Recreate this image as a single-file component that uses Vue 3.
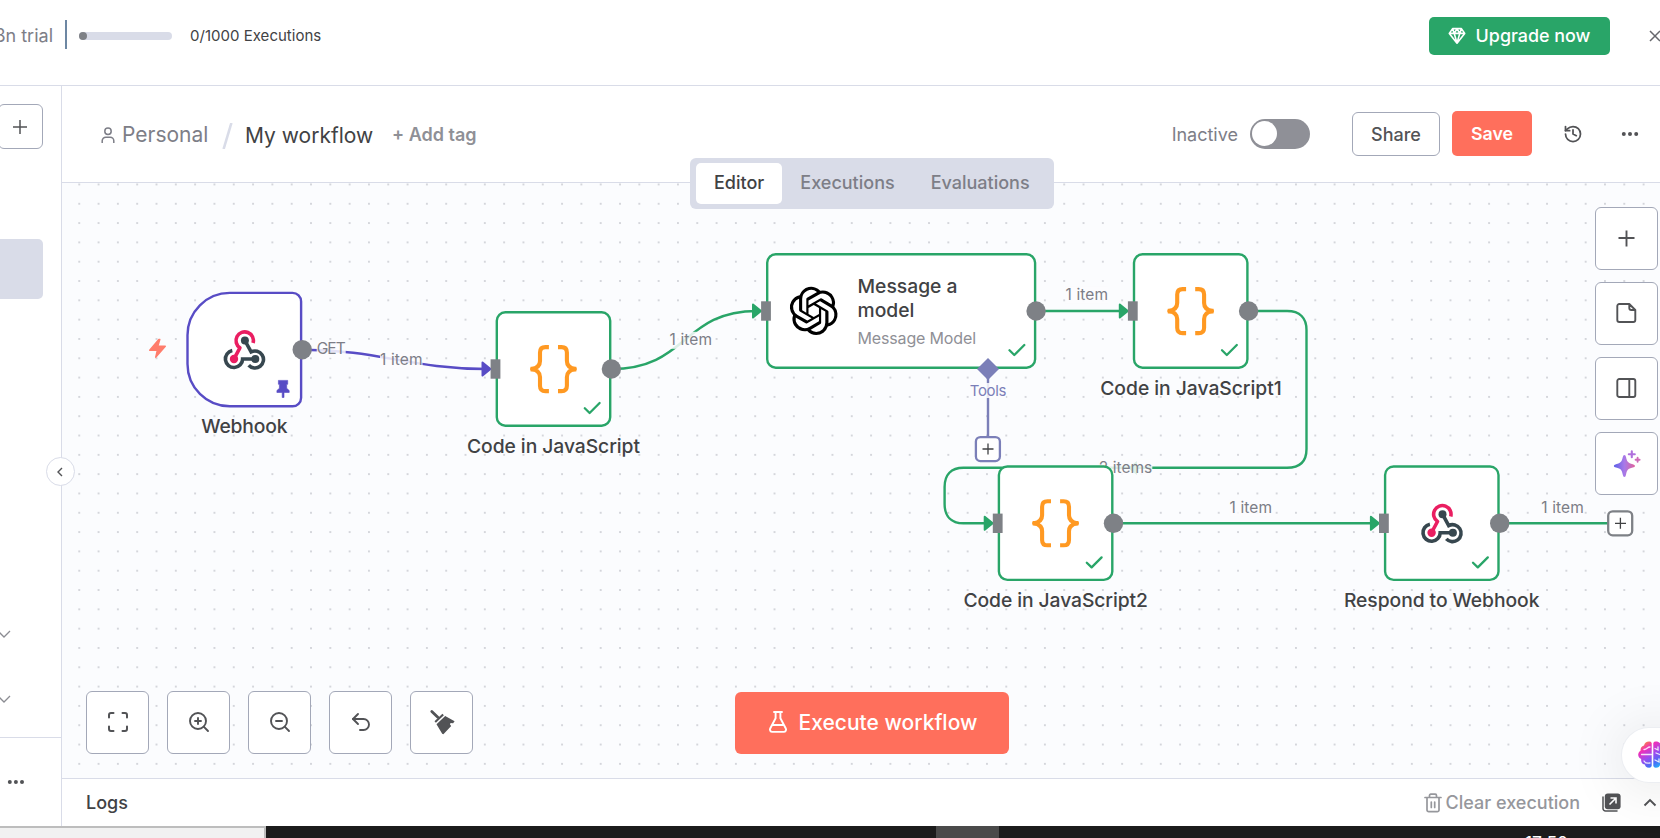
<script setup>
const tabs = [
  { name: 'Editor', active: true },
  { name: 'Executions' },
  { name: 'Evaluations' },
]

const codeNodes = [
  { x: 495.6, y: 311.1, title: 'Code in JavaScript', len: 173, cx: 553.5, base: 452.5 },
  { x: 1132.8, y: 253.1, title: 'Code in JavaScript1', len: 181.5, cx: 1191, base: 394.7 },
  { x: 997.7, y: 465.3, title: 'Code in JavaScript2', len: 184.5, cx: 1055.7, base: 607 },
]

const inputs = [
  { x: 495.5, y: 369, color: '#584cc5' },
  { x: 766, y: 311, color: '#29a568' },
  { x: 1132.8, y: 311, color: '#29a568' },
  { x: 997.7, y: 523.3, color: '#29a568' },
  { x: 1383.9, y: 523.3, color: '#29a568' },
]

const outputs = [
  { x: 302.2, y: 349.7 },
  { x: 611.4, y: 369 },
  { x: 1036.1, y: 311 },
  { x: 1248.6, y: 311 },
  { x: 1113.5, y: 523.3 },
  { x: 1499.7, y: 523.3 },
]

const edgeLabels = [
  { text: 'GET', x: 316.7, y: 354.3, len: 29 },
  { text: '1 item', x: 380, y: 364.6, len: 42.5 },
  { text: '1 item', x: 669.6, y: 345.3, len: 42.5 },
  { text: '1 item', x: 1065.6, y: 300, len: 42.5 },
  { text: '2 items', x: 1098.8, y: 473.2, len: 53.5 },
  { text: '1 item', x: 1229.6, y: 512.9, len: 42.5 },
  { text: '1 item', x: 1541.3, y: 512.9, len: 42.5 },
]

const checks = [
  [583.8, 402],
  [1008.5, 344],
  [1221, 344],
  [1085.8, 556.4],
  [1472, 556.4],
]

const webhookIcons = [
  [223.7, 330.5],
  [1421.3, 504.2],
]
</script>

<template>
  <div class="app">
    <header class="banner">
      <span class="trial">n8n trial</span>
      <span class="divider"></span>
      <span class="meter"><i></i></span>
      <span class="count">0/1000 Executions</span>
      <button class="upgrade">
        <svg width="18" height="18" viewBox="0 0 18 18" fill="none" stroke="#fff" stroke-width="1.6" stroke-linejoin="round">
          <path d="M4.6 1.6h8.8l3.3 4.8L9 16.2 1.3 6.4zM1.3 6.4h15.4M6.2 6.4 9 1.8l2.8 4.6L9 16zM4.6 1.6l1.6 4.8M13.4 1.6l-1.6 4.8" />
        </svg>
        <span>Upgrade now</span>
      </button>
      <svg class="close" width="12" height="12" viewBox="0 0 12 12" fill="none" stroke="#66676c" stroke-width="1.5">
        <path d="M1 1l10 10M11 1L1 11" />
      </svg>
    </header>

    <div class="body">
      <aside class="sidebar">
        <div class="side-add">
          <svg width="14" height="14" viewBox="0 0 14 14" stroke="#525356" stroke-width="1.5"><path d="M7 0v14M0 7h14" /></svg>
        </div>
        <div class="side-active"></div>
        <svg class="chev c1" width="14" height="8" viewBox="0 0 14 8" fill="none" stroke="#8b8c92" stroke-width="1.3"><path d="M1 1l6 6 6-6" /></svg>
        <svg class="chev c2" width="14" height="8" viewBox="0 0 14 8" fill="none" stroke="#8b8c92" stroke-width="1.3"><path d="M1 1l6 6 6-6" /></svg>
        <div class="side-foot">
          <svg width="18" height="6" viewBox="0 0 18 6" fill="#525356"><circle cx="2.8" cy="3" r="2" /><circle cx="8.9" cy="3" r="2" /><circle cx="15" cy="3" r="2" /></svg>
        </div>
        <div class="collapse">
          <svg width="6" height="10" viewBox="0 0 6 10" fill="none" stroke="#525356" stroke-width="1.4"><path d="M5 1L1 5l4 4" /></svg>
        </div>
      </aside>

      <main class="main">
        <div class="toolbar">
          <svg class="person" width="14" height="17" viewBox="0 0 14 17" fill="none" stroke="#7d7e87" stroke-width="1.5">
            <circle cx="7" cy="4.3" r="3.2" /><path d="M1.2 16v-2.2a3.6 3.6 0 0 1 3.6-3.6h4.4a3.6 3.6 0 0 1 3.6 3.6V16" />
          </svg>
          <span class="personal">Personal</span>
          <svg class="slash" width="11" height="26" viewBox="0 0 11 26" stroke="#d9dce8" stroke-width="2.6"><path d="M9.4 0L1.6 26" /></svg>
          <span class="wfname">My workflow</span>
          <span class="addtag">+ Add tag</span>
          <span class="inactive">Inactive</span>
          <span class="switch"><i></i></span>
          <button class="share">Share</button>
          <button class="save">Save</button>
          <svg class="history" width="20" height="20" viewBox="0 0 24 24" fill="none" stroke="#525356" stroke-width="2.1" stroke-linecap="round" stroke-linejoin="round">
            <path d="M3 12a9 9 0 1 0 9-9 9.75 9.75 0 0 0-6.74 2.74L3 8" /><path d="M3 3v5h5M12 7v5l4 2" />
          </svg>
          <svg class="more" width="18" height="6" viewBox="0 0 18 6" fill="#525356"><circle cx="2.8" cy="3" r="2" /><circle cx="9" cy="3" r="2" /><circle cx="15.2" cy="3" r="2" /></svg>
        </div>

        <div class="canvas">
          <svg class="flow" width="1660" height="838" viewBox="0 0 1660 838">
            <defs>
              <pattern id="dots" x="69.6" y="174.8" width="19.313" height="19.313" patternUnits="userSpaceOnUse">
                <circle cx="9.65" cy="9.65" r="0.8" fill="#a3a5af" />
              </pattern>
              <g id="braces" fill="none" stroke="#ff9922" stroke-width="4.1">
                <path d="M18.8 2H15.3Q9.9 2 9.9 7.4V16Q9.9 22.4 2 24Q9.9 25.6 9.9 32V40.6Q9.9 46 15.3 46H18.8" stroke-linejoin="round" />
                <path d="M27.9 2H31.4Q36.8 2 36.8 7.4V16Q36.8 22.4 44.7 24Q36.8 25.6 36.8 32V40.6Q36.8 46 31.4 46H27.9" stroke-linejoin="round" />
                <path d="M0.5 24H6M40.7 24H46.2" stroke-width="4.6" />
              </g>
              <g id="hook" fill="none" stroke-width="3.6">
                <path d="M29.4 12.4A8.7 8.7 0 1 0 16.2 17.3L10.3 28.3" stroke="#ea1e61" stroke-linejoin="round" />
                <circle cx="10.3" cy="28.5" r="4.2" fill="#ea1e61" stroke="none" />
                <g stroke="#37474f">
                  <path d="M21.2 10L27.4 21.4A8.5 8.5 0 1 1 25 34.7" />
                  <path d="M31.6 28.5H18.9A8.6 8.6 0 1 1 8.6 20" />
                </g>
                <circle cx="21.2" cy="10" r="4" fill="#37474f" stroke="none" />
                <circle cx="31.6" cy="28.5" r="4" fill="#37474f" stroke="none" />
              </g>
            </defs>
            <rect x="62" y="183" width="1598" height="595" fill="url(#dots)" />

            <g fill="none" stroke="#29a568" stroke-width="2.4">
              <path d="M302 349.7C380 349.7 410 369 487 369" stroke="#584cc5" />
              <path d="M611 369C688 369 682 311 757 311" />
              <path d="M1036 311H1126" />
              <path d="M1248 311H1287C1300 311 1306.5 318 1306.5 330V449C1306.5 461 1300 467.8 1287 467.8H963.5C951 467.8 944.6 475 944.6 487V504C944.6 516 951 523.3 963.5 523.3H990" />
              <path d="M1113 523.3H1376M1499 523.3H1608" />
              <path d="M988 369V437" stroke="#7b7fb8" />
            </g>
            <path d="M1137 461V475L1128 468z" fill="#29a568" />

            <g v-for="(l, i) in edgeLabels" :key="i">
              <rect :x="l.x" :y="l.y - 13.5" :width="l.len" height="17" fill="#fbfcfe" fill-opacity="0.85" />
              <text :x="l.x" :y="l.y" :textLength="l.len" class="edge-label">{{ l.text }}</text>
            </g>
            <rect x="970" y="383" width="36" height="15" fill="#fbfcfe" fill-opacity="0.85" />
            <text x="969.8" y="396.2" textLength="36.6" class="edge-label tools">Tools</text>

            <g fill="#fff" stroke="#29a568" stroke-width="2.4">
              <path d="M229.8 292.9H292.5A8.6 8.6 0 0 1 301.1 301.5V397.7A8.6 8.6 0 0 1 292.5 406.3H229.8A42.3 42.3 0 0 1 187.5 364V335.2A42.3 42.3 0 0 1 229.8 292.9z" stroke="#584cc5" />
              <rect v-for="n in codeNodes" :key="n.title" :x="n.x + 1.2" :y="n.y + 1.2" width="113.4" height="113.4" rx="8.5" />
              <rect x="767.2" y="254.3" width="267.9" height="113.4" rx="8.5" />
              <rect x="1385.1" y="466.5" width="113.4" height="113.4" rx="8.5" />
            </g>

            <use v-for="n in codeNodes" :key="'b' + n.title" href="#braces" :x="n.x + 34.5" :y="n.y + 34" />
            <use v-for="(w, i) in webhookIcons" :key="'w' + i" href="#hook" :x="w[0]" :y="w[1]" />
            <path v-for="(c, i) in checks" :key="'c' + i" :transform="`translate(${c[0]} ${c[1]})`" d="M1 6.3L5.8 11L15.8 1" fill="none" stroke="#29a568" stroke-width="2.3" stroke-linecap="round" stroke-linejoin="round" />

            <path transform="translate(789.6 286.8) scale(2.01)" fill="#000" d="M22.2819 9.8211a5.9847 5.9847 0 0 0-.5157-4.9108 6.0462 6.0462 0 0 0-6.5098-2.9A6.0651 6.0651 0 0 0 4.9807 4.1818a5.9847 5.9847 0 0 0-3.9977 2.9 6.0462 6.0462 0 0 0 .7427 7.0966 5.98 5.98 0 0 0 .511 4.9107 6.051 6.051 0 0 0 6.5146 2.9001A5.9847 5.9847 0 0 0 13.2599 24a6.0557 6.0557 0 0 0 5.7718-4.2058 5.9894 5.9894 0 0 0 3.9977-2.9001 6.0557 6.0557 0 0 0-.7475-7.0729zm-9.022 12.6081a4.4755 4.4755 0 0 1-2.8764-1.0408l.1419-.0804 4.7783-2.7582a.7948.7948 0 0 0 .3927-.6813v-6.7369l2.02 1.1686a.071.071 0 0 1 .038.052v5.5826a4.504 4.504 0 0 1-4.4945 4.4944zm-9.6607-4.1254a4.4708 4.4708 0 0 1-.5346-3.0137l.142.0852 4.783 2.7582a.7712.7712 0 0 0 .7806 0l5.8428-3.3685v2.3324a.0804.0804 0 0 1-.0332.0615L9.74 19.9502a4.4992 4.4992 0 0 1-6.1408-1.6464zM2.3408 7.8956a4.485 4.485 0 0 1 2.3655-1.9728V11.6a.7664.7664 0 0 0 .3879.6765l5.8144 3.3543-2.0201 1.1685a.0757.0757 0 0 1-.071 0l-4.8303-2.7865A4.504 4.504 0 0 1 2.3408 7.872zm16.5963 3.8558L13.1038 8.364 15.1192 7.2a.0757.0757 0 0 1 .071 0l4.8303 2.7913a4.4944 4.4944 0 0 1-.6765 8.1042v-5.6772a.79.79 0 0 0-.407-.667zm2.0107-3.0231l-.142-.0852-4.7735-2.7818a.7759.7759 0 0 0-.7854 0L9.409 9.2297V6.8974a.0662.0662 0 0 1 .0284-.0615l4.8303-2.7866a4.4992 4.4992 0 0 1 6.6802 4.66zM8.3065 12.863l-2.02-1.1638a.0804.0804 0 0 1-.038-.0567V6.0742a4.4992 4.4992 0 0 1 7.3757-3.4537l-.142.0805L8.704 5.459a.7948.7948 0 0 0-.3927.6813zm1.0976-2.3654l2.602-1.4998 2.6069 1.4998v2.9994l-2.5974 1.4997-2.6067-1.4997Z" />
            <text x="857.5" y="293.3" class="title">Message a</text>
            <text x="857.5" y="317.3" class="title">model</text>
            <text x="857.5" y="343.5" textLength="118.5" class="subtitle">Message Model</text>

            <g fill="#7e8186">
              <g v-for="(p, i) in inputs" :key="'i' + i">
                <path :transform="`translate(${p.x} ${p.y})`" d="M-13 -6.5L-5 0L-13 6.5z" :fill="p.color" :stroke="p.color" stroke-width="2" stroke-linejoin="round" />
                <rect :x="p.x - 4.9" :y="p.y - 9.7" width="9.8" height="19.4" />
              </g>
              <circle v-for="(p, i) in outputs" :key="'o' + i" :cx="p.x" :cy="p.y" r="9.7" />
            </g>
            <path d="M988 358L999 369L988 380L977 369z" fill="#7b7fb8" />
            <rect x="975.9" y="437.1" width="24" height="24" rx="4.5" fill="#fff" stroke="#7b7fb8" stroke-width="2.3" />
            <path d="M982.5 449H993.5M988 443.5V454.5" stroke="#414244" stroke-width="1.3" />
            <rect x="1608.2" y="511.3" width="24" height="24" rx="4.5" fill="#fff" stroke="#7e8186" stroke-width="2.3" />
            <path d="M1615 523.3H1626M1620.4 517.8V528.8" stroke="#414244" stroke-width="1.3" />

            <path d="M158.8 339.5L149.7 350.3H157.3L155.7 357.2L165.3 346.3H157.8L159.8 339.5z" fill="#ff7d6c" stroke="#ff7d6c" stroke-width="1.4" stroke-linejoin="round" />
            <path d="M278.4 380.4H287.7V384.3H286.7V388.3L289.2 390.5V392.5H284V397.5H282.2V392.5H276.9V390.5L279.4 388.3V384.3H278.4z" fill="#584cc5" stroke="#584cc5" stroke-width=".6" stroke-linejoin="round" />

            <text x="244.4" y="432.8" text-anchor="middle" textLength="86.5" class="title">Webhook</text>
            <text v-for="n in codeNodes" :key="'t' + n.title" :x="n.cx" :y="n.base" text-anchor="middle" :textLength="n.len" class="title">{{ n.title }}</text>
            <text x="1441.7" y="607" text-anchor="middle" textLength="195.5" class="title">Respond to Webhook</text>
          </svg>

          <nav class="tabs">
            <span v-for="t in tabs" :key="t.name" :class="['tab', { active: t.active }]">{{ t.name }}</span>
          </nav>

          <div class="side-tools">
            <button class="tool"><svg width="17" height="17" viewBox="0 0 17 17" stroke="#525356" stroke-width="1.9"><path d="M8.5 0.5v16M0.5 8h16" /></svg></button>
            <button class="tool"><svg width="21" height="21" viewBox="0 0 21 21" fill="none" stroke="#525356" stroke-width="1.9" stroke-linejoin="round"><path d="M13.3 1H3.3a2 2 0 0 0-2 2v14a2 2 0 0 0 2 2h14a2 2 0 0 0 2-2V7zM13.300 1v4a2 2 0 0 0 2 2h4" /></svg></button>
            <button class="tool"><svg width="21" height="21" viewBox="0 0 21 21" fill="none" stroke="#525356" stroke-width="1.9"><rect x="1.3" y="1" width="18" height="18" rx="2" /><path d="M13.300 1v18" /></svg></button>
            <button class="tool">
              <svg width="28" height="28" viewBox="0 0 28 28">
                <defs><linearGradient id="spark" x1="0" x2="1"><stop offset="0" stop-color="#5b60e8" /><stop offset=".5" stop-color="#a879e8" /><stop offset="1" stop-color="#e0639b" /></linearGradient></defs>
                <path d="M11.4 4.900q1.200 0 1.600 2.200c.9 4.500 1.800 6 6.800 7.200q2.200.5 2.200 1.600t-2.200 1.600c-5 1.200-5.900 2.700-6.800 7.200q-.4 2.200-1.600 2.200t-1.600-2.200c-.9-4.500-1.800-6-6.800-7.200q-2.200-.5-2.200-1.600t2.200-1.600c5-1.200 5.900-2.700 6.800-7.200q.4-2.200 1.600-2.200z" fill="url(#spark)" />
                <path d="M18.800 1.200v6M15.800 4.200h6" stroke="#b070dd" stroke-width="2.100" stroke-linecap="round" />
                <path d="M24.600 7.800v4M22.600 9.800h4" stroke="#cf6ab8" stroke-width="1.900" stroke-linecap="round" />
              </svg>
            </button>
          </div>

          <div class="bottom-tools">
            <button class="tool"><svg width="22" height="22" viewBox="0 0 22 22" fill="none" stroke="#525356" stroke-width="2" stroke-linecap="round"><path d="M2 6.500V4a2 2 0 0 1 2-2h2.500M15.500 2H18a2 2 0 0 1 2 2v2.500M20 15.500V18a2 2 0 0 1-2 2h-2.500M6.500 20H4a2 2 0 0 1-2-2v-2.500" /></svg></button>
            <button class="tool"><svg width="24" height="24" viewBox="0 0 24 24" fill="none" stroke="#525356" stroke-width="1.900" stroke-linecap="round"><circle cx="11" cy="11" r="8" /><path d="M21 21l-4.300-4.300M11 8v6M8 11h6" /></svg></button>
            <button class="tool"><svg width="24" height="24" viewBox="0 0 24 24" fill="none" stroke="#525356" stroke-width="1.900" stroke-linecap="round"><circle cx="11" cy="11" r="8" /><path d="M21 21l-4.300-4.300M8 11h6" /></svg></button>
            <button class="tool"><svg width="24" height="24" viewBox="0 0 24 24" fill="none" stroke="#525356" stroke-width="1.900" stroke-linecap="round" stroke-linejoin="round"><path d="M9 14L4 9l5-5" /><path d="M4 9h10.500a5.500 5.500 0 0 1 0 11H11" /></svg></button>
            <button class="tool"><svg width="26" height="26" viewBox="0 0 26 26" fill="#525356"><path d="M2.800 2.500L8.800 8.300" stroke="#525356" stroke-width="2.800" stroke-linecap="round" /><path d="M5.500 12.300L13.400 4.800l1.500 1.400-8 7.600zM7.500 15.200L16.200 7l9.400 5.200-1.500 2.100-2.600-.4-.5 1.600 1.200 1.500-7.800 8.200-1.200-.4z" /></svg></button>
          </div>

          <button class="execute">
            <svg width="20" height="24" viewBox="0 0 20 24" fill="none" stroke="#fff" stroke-width="1.900" stroke-linejoin="round" stroke-linecap="round">
              <path d="M6 2h8M7.600 2v6.300L2.200 18.500a2.300 2.300 0 0 0 2 3.400h11.600a2.300 2.300 0 0 0 2-3.400L12.400 8.300V2M5 15h10" />
            </svg>
            <span>Execute workflow</span>
          </button>
        </div>

        <div class="logs">
          <span class="logs-title">Logs</span>
          <svg class="trash" width="18" height="20" viewBox="0 0 18 20" fill="none" stroke="#96979c" stroke-width="1.700" stroke-linecap="round" stroke-linejoin="round">
            <path d="M1 4.500h16M3 4.500V17a1.700 1.700 0 0 0 1.700 1.700h8.600A1.700 1.700 0 0 0 15 17V4.500M5.500 4.300V2.500A1.300 1.300 0 0 1 6.800 1.200h4.400a1.300 1.300 0 0 1 1.300 1.300v1.800M7.300 9v5.500M10.700 9v5.500" />
          </svg>
          <span class="clear">Clear execution</span>
          <svg class="popout" width="19" height="19" viewBox="0 0 19 19">
            <path d="M1 4v11.500A2.500 2.500 0 0 0 3.500 18H15" fill="none" stroke="#525356" stroke-width="1.500" stroke-linecap="round" />
            <rect x="2.800" y=".4" width="15.800" height="15.800" rx="3" fill="#525356" />
            <path d="M7.500 11.500l6-6M8.500 5h5.500v5.500" fill="none" stroke="#fff" stroke-width="1.600" />
          </svg>
          <svg class="up" width="14" height="9" viewBox="0 0 14 9" fill="none" stroke="#525356" stroke-width="1.900"><path d="M1.500 7.500L7 2l5.500 5.500" /></svg>
        </div>
      </main>
    </div>

    <footer class="taskbar">
      <div class="search"></div>
      <div class="task"></div>
      <span class="clock">17:50</span>
    </footer>

    <div class="assistant">
      <svg width="30" height="28" viewBox="0 0 30 28">
        <defs>
          <linearGradient id="brain" gradientUnits="userSpaceOnUse" x1="3" y1="1" x2="20" y2="27">
            <stop offset="0" stop-color="#f9a01b" /><stop offset=".26" stop-color="#f02fb8" /><stop offset=".55" stop-color="#9a4cf0" /><stop offset=".8" stop-color="#4a6cf6" /><stop offset="1" stop-color="#22b3f8" />
          </linearGradient>
        </defs>
        <path d="M13.700 2v23a2.500 2.500 0 0 1-2.500 1.800c-3 0-4-1.500-4.300-3.300C4 23 2.800 21 3.200 18 .5 17 .2 14.500.2 13.500S1 10.500 2.500 9.700C2.500 7 3.500 5 6 4.500 6.500 1.800 8.500.6 11 .6a2.700 2.700 0 0 1 2.700 1.400z" fill="url(#brain)" />
        <path d="M15.300 2v23a2.500 2.500 0 0 0 2.500 1.800c3 0 4-1.500 4.300-3.300 3-.5 4-2.500 4-5.500 2-1 3-3 3-4.500s-1-3-2.500-3.800c0-2.700-1-4.700-3.500-5.200C22.500 1.800 20.500.6 18 .6A2.700 2.700 0 0 0 15.300 2z" fill="url(#brain)" />
        <path d="M3.500 13.500h10M6 8.500c3 .3 3-2.500 6-2.500M6 20c1 2 3.500 2.500 6 2M17 7.500l3 1.500v-3M18 12l5 2M17 19l4 2v-3" fill="none" stroke="#fff" stroke-opacity=".85" stroke-width="1.300" stroke-linecap="round" />
      </svg>
    </div>
  </div>
</template>

<style>
body {
  margin: 0;
  overflow: hidden;
}
</style>

<style scoped>
.app {
  position: relative;
  width: 1660px;
  height: 838px;
  overflow: hidden;
  display: flex;
  flex-direction: column;
  background: #fff;
  font-family: Inter, "Open Sans", sans-serif;
  font-size: 18px;
  color: #414244;
  white-space: nowrap;
}
.app * { box-sizing: border-box; }
svg { display: block; flex: none; }
button {
  font: inherit;
  padding: 0;
  margin: 0;
  border: 0;
  display: flex;
  align-items: center;
  justify-content: center;
}
.banner {
  height: 86px;
  flex: none;
  display: flex;
  align-items: center;
  border-bottom: 1px solid #d9dce8;
  padding-bottom: 14px;
}
.trial {
  width: 53px;
  display: flex;
  justify-content: flex-end;
  color: #7d7e87;
  flex: none;
}
.divider { width: 2px; height: 29px; margin: -2px 0 0 12px; background: #6d87a3; }
.meter { width: 93px; height: 8px; margin-left: 12px; border-radius: 4px; background: #d9dce8; }
.meter i { display: block; width: 8px; height: 8px; border-radius: 4px; background: #7e8186; }
.count { margin-left: 18px; font-size: 15px; letter-spacing: 0.02px; width: 140px; }
.upgrade {
  margin-left: auto;
  width: 181px;
  height: 38px;
  border-radius: 5px;
  background: #29a568;
  color: #fff;
  font-weight: 500;
  font-size: 17.9px;
  gap: 10px;
}
.upgrade svg { margin-left: -1px; }
.close { margin: 0 -1px 0 39px; }

.body { height: 740px; flex: none; display: flex; }
.sidebar {
  position: relative;
  width: 62px;
  flex: none;
  border-right: 1px solid #d9dce8;
  display: flex;
  flex-direction: column;
}
.side-add {
  width: 45px;
  height: 45px;
  margin: 18px 0 0 -2px;
  border: 1px solid #a3a8b8;
  border-radius: 6px;
  display: flex;
  align-items: center;
  justify-content: center;
  padding-right: 1px;
}
.side-active { width: 48px; height: 60px; margin: 90px 0 0 -5px; border-radius: 5px; background: #d9dce8; }
.chev { margin-left: -3px; }
.c1 { margin-top: 331px; }
.c2 { margin-top: 57px; }
.side-foot { margin-top: auto; height: 89px; border-top: 1px solid #d9dce8; padding: 41px 0 0 7px; }
.collapse {
  position: absolute;
  left: 46px;
  top: 371px;
  width: 29px;
  height: 29px;
  border: 1px solid #d9dce8;
  border-radius: 50%;
  background: #fff;
  z-index: 3;
  display: flex;
  align-items: center;
  justify-content: center;
  padding-right: 2px;
}
.main { flex: 1; min-width: 0; display: flex; flex-direction: column; }
.toolbar {
  height: 97px;
  flex: none;
  border-bottom: 1px solid #d9dce8;
  display: flex;
  align-items: center;
  padding-left: 39px;
}
.person { margin-top: 2px; }
.personal { margin: 1px 0 0 7px; width: 100px; font-size: 21px; color: #7d7e87; }
.slash { margin-top: 3px; }
.wfname { margin: 3px 0 0 12px; width: 147px; font-size: 21px; }
.addtag { color: #8f9096; font-weight: 600; }
.inactive { margin-left: auto; color: #7d7e87; }
.switch { width: 60px; height: 30px; margin-left: 12px; border-radius: 15px; background: #8f9097; padding: 2px; }
.switch i { display: block; width: 25px; height: 25px; border-radius: 50%; background: #fff; }
.share { width: 88px; height: 44px; margin-left: 42px; border: 1px solid #a3a8b8; border-radius: 6px; background: #fff; color: #525356; font-weight: 500; }
.save { width: 80px; height: 45px; margin: -1px 0 0 12px; border-radius: 5px; background: #ff6f5c; color: #fff; font-weight: 600; font-size: 17.8px; }
.history { margin: -1px 0 0 31px; }
.more { margin: 0 21px 0 38px; }

.canvas { position: relative; height: 595px; flex: none; background: #fbfcfe; }
.flow { position: absolute; left: -62px; top: -183px; clip-path: inset(183px 0 60px 62px); }
.title { font-size: 19.3px; font-weight: 500; fill: #414244; }
.subtitle { font-size: 16px; fill: #8f9096; }
.edge-label { font-size: 15.5px; fill: #7d7e87; }
.edge-label.tools { fill: #7b7fb8; font-size: 15px; }

.tabs {
  position: absolute;
  left: 628px;
  top: -25px;
  width: 364px;
  height: 51px;
  padding: 5px 6px;
  border-radius: 6px;
  background: #d9dce8;
  display: flex;
}
.tab { padding: 0 18px; line-height: 40px; border-radius: 5px; color: #7d7e87; font-weight: 500; }
.tab.active { background: #fff; color: #414244; }
.side-tools { position: absolute; right: 2px; top: 24px; display: flex; flex-direction: column; gap: 12px; }
.bottom-tools { position: absolute; left: 24px; top: 508px; display: flex; gap: 18px; }
.tool { width: 63px; height: 63px; border: 1px solid #a3a8b8; border-radius: 6px; background: #fff; }
.bottom-tools .tool { padding-bottom: 2px; }
.execute {
  position: absolute;
  left: 673px;
  top: 509px;
  width: 274px;
  height: 62px;
  padding: 0 0 2px 1px;
  border-radius: 6px;
  background: #ff6f5c;
  color: #fff;
  font-size: 21px;
  font-weight: 500;
  gap: 11px;
}
.logs {
  height: 48px;
  flex: none;
  border-top: 1px solid #d9dce8;
  display: flex;
  align-items: center;
  padding: 0 3px 0 24px;
  background: #fff;
}
.logs-title { font-weight: 500; }
.trash { margin-left: auto; }
.clear { margin-left: 4px; color: #96979c; font-weight: 500; }
.popout { margin-left: 22px; }
.up { margin-left: 22px; }

.taskbar { height: 12px; flex: none; display: flex; background: #1c1c1c; overflow: hidden; }
.search { width: 266px; height: 14px; border: 2px solid #bdbdbd; border-left: 0; border-bottom: 0; background: #f1f1f1; }
.task { width: 63px; margin-left: 670px; background: #4a4a4a; }
.clock { margin-left: 526px; margin-top: 7px; color: #fff; font-size: 17.5px; line-height: 19px; }
.assistant {
  position: absolute;
  left: 1622px;
  top: 728px;
  width: 70px;
  height: 54px;
  border-radius: 27px;
  background: #fff;
  box-shadow: 0 0 0 1px #eceef2, 0 4px 60px rgba(0, 0, 0, 0.12);
  padding: 13px 0 0 16px;
}
</style>
